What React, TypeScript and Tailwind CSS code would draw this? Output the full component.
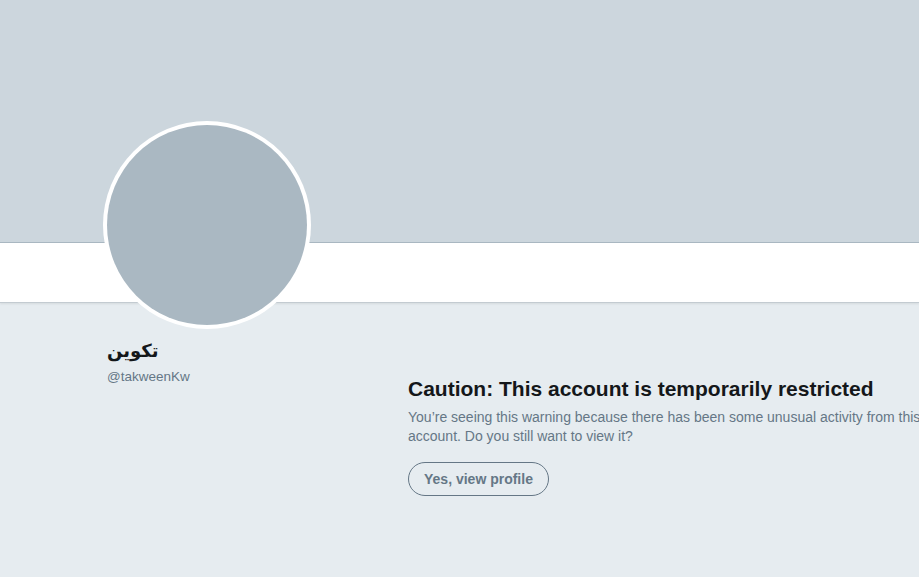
export default function App() {
  return (
    <div className="w-full h-[577px] overflow-hidden bg-[#e6ecf0] font-['Liberation_Sans','DejaVu_Sans',sans-serif]">
      <div className="h-[243px] bg-[#ccd6dd] border-b border-[#aab8c2]" />
      <div className="h-[60px] bg-white border-b border-[#c3cbd1] shadow-[0_1px_2px_rgba(0,0,0,0.08)]" />
      <div className="flex">
        <div className="w-[408px] shrink-0 pl-[103px]">
          <div className="-mt-[182px] w-[208px] h-[208px] rounded-full bg-white p-[4px] relative">
            <div className="w-full h-full rounded-full bg-[#aab8c2]" />
          </div>
          <div className="pl-[4px] mt-[10px] text-[18px] leading-[24px] font-bold text-[#14171a] font-['DejaVu_Sans',sans-serif]" dir="rtl" style={{ textAlign: "left" }}>
            <span dir="rtl">تكوين</span>
          </div>
          <div className="pl-[4px] mt-[5px] text-[13.5px] leading-[18px] text-[#657786]">@takweenKw</div>
        </div>
        <div className="w-[560px] shrink-0 pt-[73px]">
          <h1 className="text-[21px] leading-[25px] font-bold text-[#14171a]">Caution: This account is temporarily restricted</h1>
          <p className="mt-[7px] text-[14px] leading-[19px] text-[#657786] w-[525px]">
            You’re seeing this warning because there has been some unusual activity from this account. Do you still want to view it?
          </p>
          <button className="mt-[16px] h-[34px] px-[15px] rounded-full border border-[#657786] bg-transparent text-[14px] font-bold text-[#657786]">
            Yes, view profile
          </button>
        </div>
      </div>
    </div>
  );
}
